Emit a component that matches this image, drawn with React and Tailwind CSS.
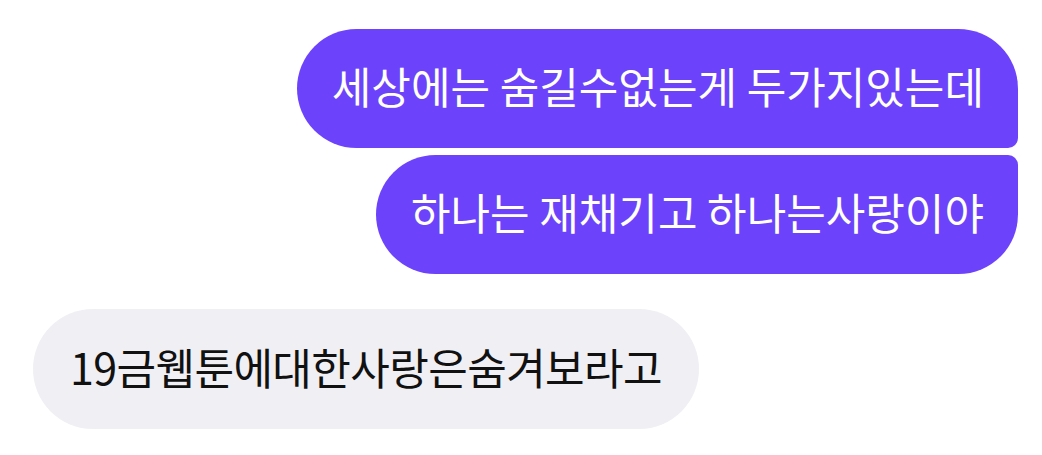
import React from 'react';

const messages = [
  { from: 'me', text: '세상에는 숨길수없는게 두가지있는데', shape: 'rounded-[60px] rounded-br-[10px]' },
  { from: 'me', text: '하나는 재채기고 하나는사랑이야', shape: 'rounded-[60px] rounded-tr-[10px]' },
  { from: 'them', text: '19금웹툰에대한사랑은숨겨보라고', shape: 'rounded-[60px]' },
];

export default function App() {
  return (
    <div
      className="w-[1042px] h-[455px] bg-white flex flex-col pt-[29px] pl-[33px] pr-[24px]"
      style={{ fontFamily: '"Noto Sans CJK KR", "Noto Sans", sans-serif' }}
    >
      <div className="flex flex-col items-end gap-[7px]">
        {messages.filter(m => m.from === 'me').map((m, i) => (
          <div
            key={i}
            className={`h-[119px] flex items-center pl-[35px] pr-[34px] pb-[6px] bg-[#6c42fb] text-white text-[43px] leading-none ${m.shape}`}
          >
            {m.text}
          </div>
        ))}
      </div>
      <div className="flex flex-col items-start mt-[35px]">
        {messages.filter(m => m.from === 'them').map((m, i) => (
          <div
            key={i}
            className={`h-[120px] flex items-center px-[37px] pb-[6px] bg-[#efeff4] text-[#111] text-[43px] leading-none tracking-[-0.6px] ${m.shape}`}
          >
            {m.text}
          </div>
        ))}
      </div>
    </div>
  );
}
